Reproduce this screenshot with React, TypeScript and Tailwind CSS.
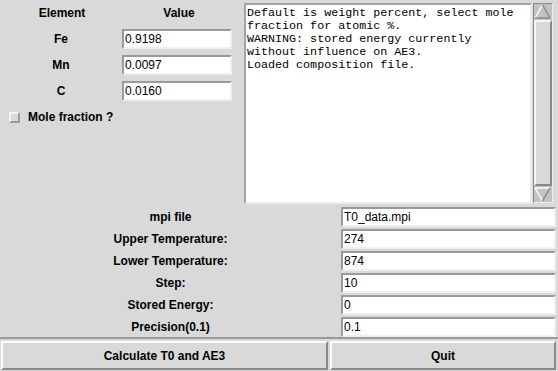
import React from "react";

const sans = { fontFamily: '"Liberation Sans", Arial, sans-serif' };

const Entry = ({ value, className }: { value: string; className: string }) => (
  <div
    className={`h-[20px] bg-white border-2 border-t-[#9a9a9a] border-l-[#9a9a9a] border-b-[#efefef] border-r-[#efefef] pl-[1px] text-[12px] leading-[16px] text-black ${className}`}
  >
    {value}
  </div>
);

const Arrow = ({ up }: { up?: boolean }) => (
  <svg width="17" height="15" viewBox="0 0 17 15" className="block">
    {up ? (
      <>
        <polygon points="8.5,1 16,14 1,14" fill="#c3c3c3" />
        <line x1="8.5" y1="1" x2="1" y2="14" stroke="#ffffff" strokeWidth="1.5" />
        <line x1="8.5" y1="1" x2="16" y2="14" stroke="#8a8a8a" strokeWidth="1.5" />
        <line x1="1" y1="14" x2="16" y2="14" stroke="#8a8a8a" strokeWidth="1.5" />
      </>
    ) : (
      <>
        <polygon points="1,1 16,1 8.5,14" fill="#c3c3c3" />
        <line x1="1" y1="1" x2="16" y2="1" stroke="#ffffff" strokeWidth="1.5" />
        <line x1="1" y1="1" x2="8.5" y2="14" stroke="#ffffff" strokeWidth="1.5" />
        <line x1="16" y1="1" x2="8.5" y2="14" stroke="#8a8a8a" strokeWidth="1.5" />
      </>
    )}
  </svg>
);

const composition = [
  { el: "Fe", v: "0.9198" },
  { el: "Mn", v: "0.0097" },
  { el: "C", v: "0.0160" },
];

const params = [
  { label: "mpi file", v: "T0_data.mpi" },
  { label: "Upper Temperature:", v: "274" },
  { label: "Lower Temperature:", v: "874" },
  { label: "Step:", v: "10" },
  { label: "Stored Energy:", v: "0" },
  { label: "Precision(0.1)", v: "0.1" },
];

const log = [
  "Default is weight percent, select mole",
  "fraction for atomic %.",
  "WARNING: stored energy currently",
  "without influence on AE3.",
  "Loaded composition file.",
];

export default function App() {
  return (
    <div className="w-[558px] h-[371px] bg-[#d9d9d9] overflow-hidden text-black" style={sans}>
      {/* top: composition + log */}
      <div className="flex h-[205px]">
        <div className="w-[244px] pt-[5px] flex flex-col">
          <div className="flex h-[16px] mb-[8px] text-[12px] font-bold leading-[16px]">
            <div className="w-[124px] text-center">Element</div>
            <div className="w-[110px] text-center">Value</div>
          </div>
          <div className="flex flex-col gap-[6px]">
            {composition.map((c) => (
              <div key={c.el} className="flex items-center h-[20px]">
                <div className="w-[122px] text-center text-[12px] font-bold">{c.el}</div>
                <Entry value={c.v} className="w-[110px]" />
              </div>
            ))}
            <div className="flex items-center h-[20px]">
              <div className="ml-[9px] w-[11px] h-[11px] bg-[#d9d9d9] border-2 border-t-[#f4f4f4] border-l-[#f4f4f4] border-b-[#9a9a9a] border-r-[#9a9a9a]" />
              <span className="ml-[8px] text-[12px] font-bold">Mole fraction ?</span>
            </div>
          </div>
        </div>

        <div className="mt-[3px] h-[201px] w-[288px] bg-white border-2 border-t-[#a3a3a3] border-l-[#a3a3a3] border-b-[#ececec] border-r-[#ececec] pl-[1px] pt-[2px]">
          <div
            className="text-[11.7px] leading-[13px] whitespace-pre"
            style={{ fontFamily: '"Liberation Mono", "Courier New", monospace' }}
          >
            {log.map((l) => (
              <div key={l}>{l}</div>
            ))}
          </div>
        </div>

        {/* scrollbar */}
        <div className="mt-[3px] h-[200px] w-[20px] ml-[1px] flex flex-col bg-[#c3c3c3] border border-t-[#8a8a8a] border-l-[#8a8a8a] border-b-[#ececec] border-r-[#ececec]">
          <Arrow up />
          <div className="flex-1 my-[1px] bg-[#d9d9d9] border-2 border-t-[#f4f4f4] border-l-[#f4f4f4] border-b-[#8a8a8a] border-r-[#8a8a8a]" />
          <Arrow />
        </div>
      </div>

      {/* parameters */}
      <div className="pt-[2px] flex flex-col gap-[2px]">
        {params.map((p) => (
          <div key={p.label} className="flex items-center h-[20px]">
            <div className="w-[341px] text-center text-[12px] font-bold">{p.label}</div>
            <Entry value={p.v} className="w-[215px]" />
          </div>
        ))}
      </div>

      {/* buttons */}
      <div className="mt-0 border-t-2 border-[#9a9a9a] pt-[2px] pl-[1px] flex gap-[2px]">
        <button className="w-[327px] h-[29px] bg-[#d9d9d9] border-2 border-t-white border-l-white border-b-[#8a8a8a] border-r-[#8a8a8a] text-[12px] font-bold">
          Calculate T0 and AE3
        </button>
        <button className="w-[226px] h-[29px] bg-[#d9d9d9] border-2 border-t-white border-l-white border-b-[#8a8a8a] border-r-[#8a8a8a] text-[12px] font-bold">
          Quit
        </button>
      </div>
    </div>
  );
}
